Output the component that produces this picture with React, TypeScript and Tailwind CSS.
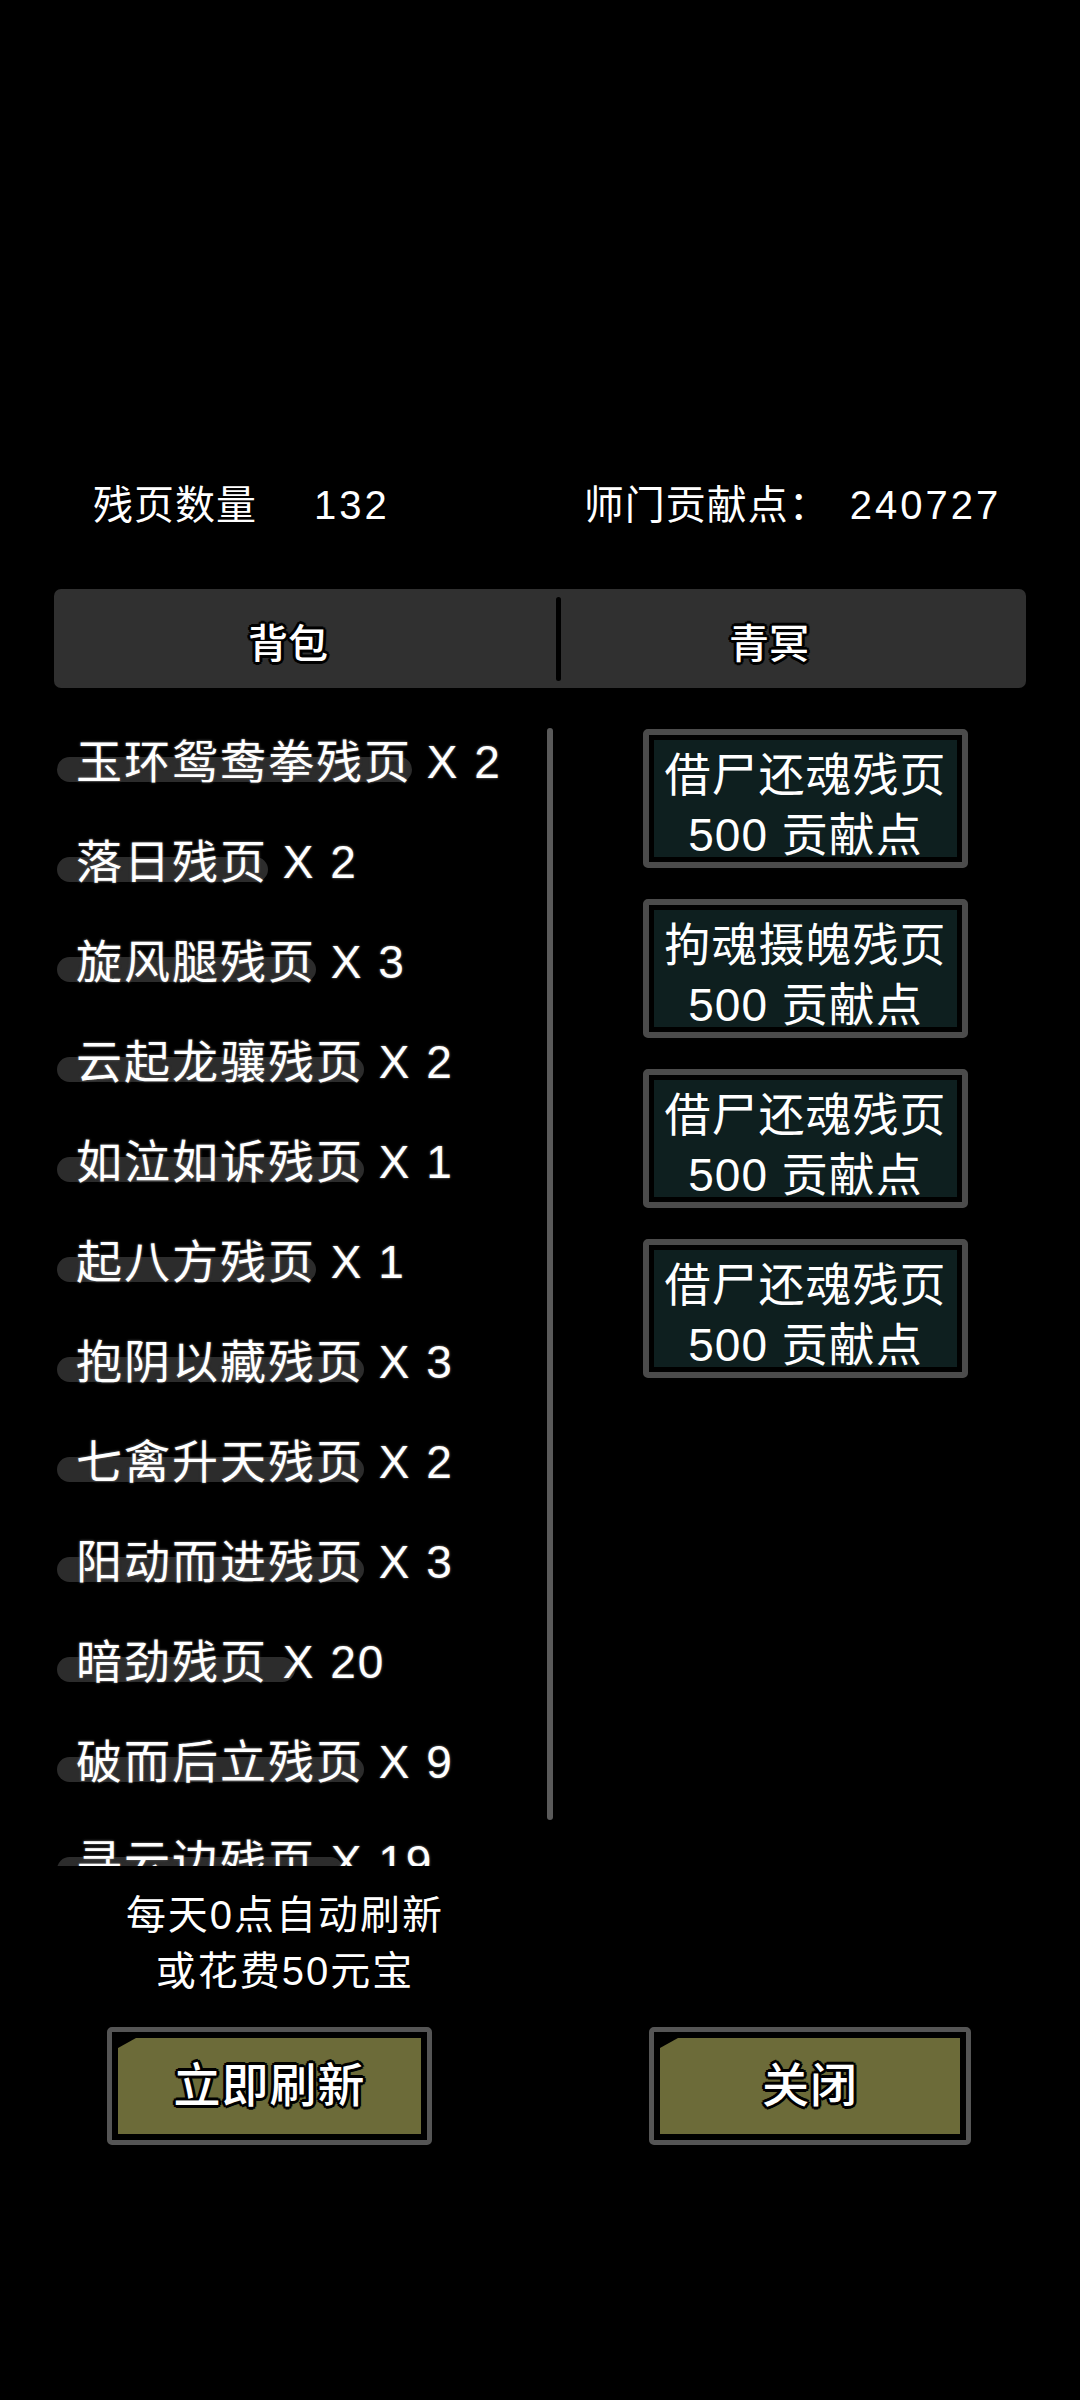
import React from 'react';

const items = [
  '玉环鸳鸯拳残页 X 2',
  '落日残页 X 2',
  '旋风腿残页 X 3',
  '云起龙骧残页 X 2',
  '如泣如诉残页 X 1',
  '起八方残页 X 1',
  '抱阴以藏残页 X 3',
  '七禽升天残页 X 2',
  '阳动而进残页 X 3',
  '暗劲残页 X 20',
  '破而后立残页 X 9',
  '寻云边残页 X 19',
];

const shop = ['借尸还魂残页', '拘魂摄魄残页', '借尸还魂残页', '借尸还魂残页'];

// thick black outline used on tab and button labels
const outline =
  '[text-shadow:0_0_3px_#000,2px_2px_0_#000,-2px_-2px_0_#000,2px_-2px_0_#000,-2px_2px_0_#000,0_3px_0_#000,0_-3px_0_#000,3px_0_0_#000,-3px_0_0_#000]';

const ShopCard: React.FC<{ name: string }> = ({ name }) => (
  <div className="h-[139px] w-[325px] rounded-[5px] border-[6px] border-[#4b4b4b] bg-black p-[5px]">
    <div className="flex h-full flex-col items-center bg-[#0e1f1f] pt-[5px] text-[46px] leading-[60px] tracking-[1px] text-white">
      <span>{name}</span>
      <span>500 贡献点</span>
    </div>
  </div>
);

const ActionButton: React.FC<{ label: string; width: string }> = ({ label, width }) => (
  <div className={`h-[118px] ${width} rounded-[5px] border-[5px] border-[#555] bg-black p-[6px]`}>
    <div className="flex h-full items-center justify-center bg-[#6c6b39] [clip-path:polygon(18px_0,100%_0,100%_100%,0_100%,0_10px)]">
      <span className={`text-[47px] font-medium tracking-[1px] text-white ${outline}`}>{label}</span>
    </div>
  </div>
);

export default function App() {
  return (
    <div
      className="flex min-h-[2400px] w-[1080px] flex-col bg-black text-white"
      style={{ fontFamily: '"Liberation Sans", "Noto Sans CJK SC", sans-serif' }}
    >
      {/* header numbers */}
      <div className="mt-[481px] flex h-[48px] items-center text-[40px] leading-[48px] tracking-[1px]">
        <span className="ml-[93px]">残页数量</span>
        <span className="ml-[57px] tracking-[3px]">132</span>
        <span className="ml-[194px]">师门贡献点：</span>
        <span className="ml-[20px] tracking-[3px]">240727</span>
      </div>

      {/* tabs */}
      <div className="ml-[54px] mt-[60px] flex h-[99px] w-[972px] items-center rounded-[7px] bg-[#303030]">
        <div className={`flex w-[502px] justify-center pr-[34px] pt-[10px] text-[40px] font-medium ${outline}`}>背包</div>
        <div className="h-[84px] w-[5px] rounded-full bg-black" />
        <div className={`flex flex-1 justify-center pr-[49px] pt-[10px] text-[40px] font-medium ${outline}`}>青冥</div>
      </div>

      {/* lists */}
      <div className="mt-[24px] flex">
        <div className="relative ml-[54px] h-[1154px] w-[506px] overflow-hidden">
          {items.map((t, i) => (
            <div key={i} className="flex h-[100px] items-center pl-[22px]">
              <span className="relative inline-block text-[46px] leading-[60px] tracking-[2px]">
                <span className="absolute left-[-19px] right-[90px] top-[25px] h-[25px] rounded-full bg-[#2c2c2c]" />
                <span className="relative [text-shadow:0_0_3px_#555,0_0_2px_#555]">{t}</span>
              </span>
            </div>
          ))}
          <div className="absolute left-[493px] top-[16px] h-[1092px] w-[6px] rounded-full bg-[#5a5a5a]" />
        </div>

        <div className="ml-[83px] mt-[17px] flex flex-col gap-[31px]">
          {shop.map((s, i) => (
            <ShopCard key={i} name={s} />
          ))}
        </div>
      </div>

      {/* refresh hint */}
      <div className="mt-[21px] w-[570px] text-center text-[40px] leading-[56px] tracking-[2px]">
        <div>每天0点自动刷新</div>
        <div>或花费50元宝</div>
      </div>

      {/* buttons */}
      <div className="mt-[28px] flex">
        <div className="ml-[107px]">
          <ActionButton label="立即刷新" width="w-[325px]" />
        </div>
        <div className="ml-[217px]">
          <ActionButton label="关闭" width="w-[322px]" />
        </div>
      </div>
    </div>
  );
}
